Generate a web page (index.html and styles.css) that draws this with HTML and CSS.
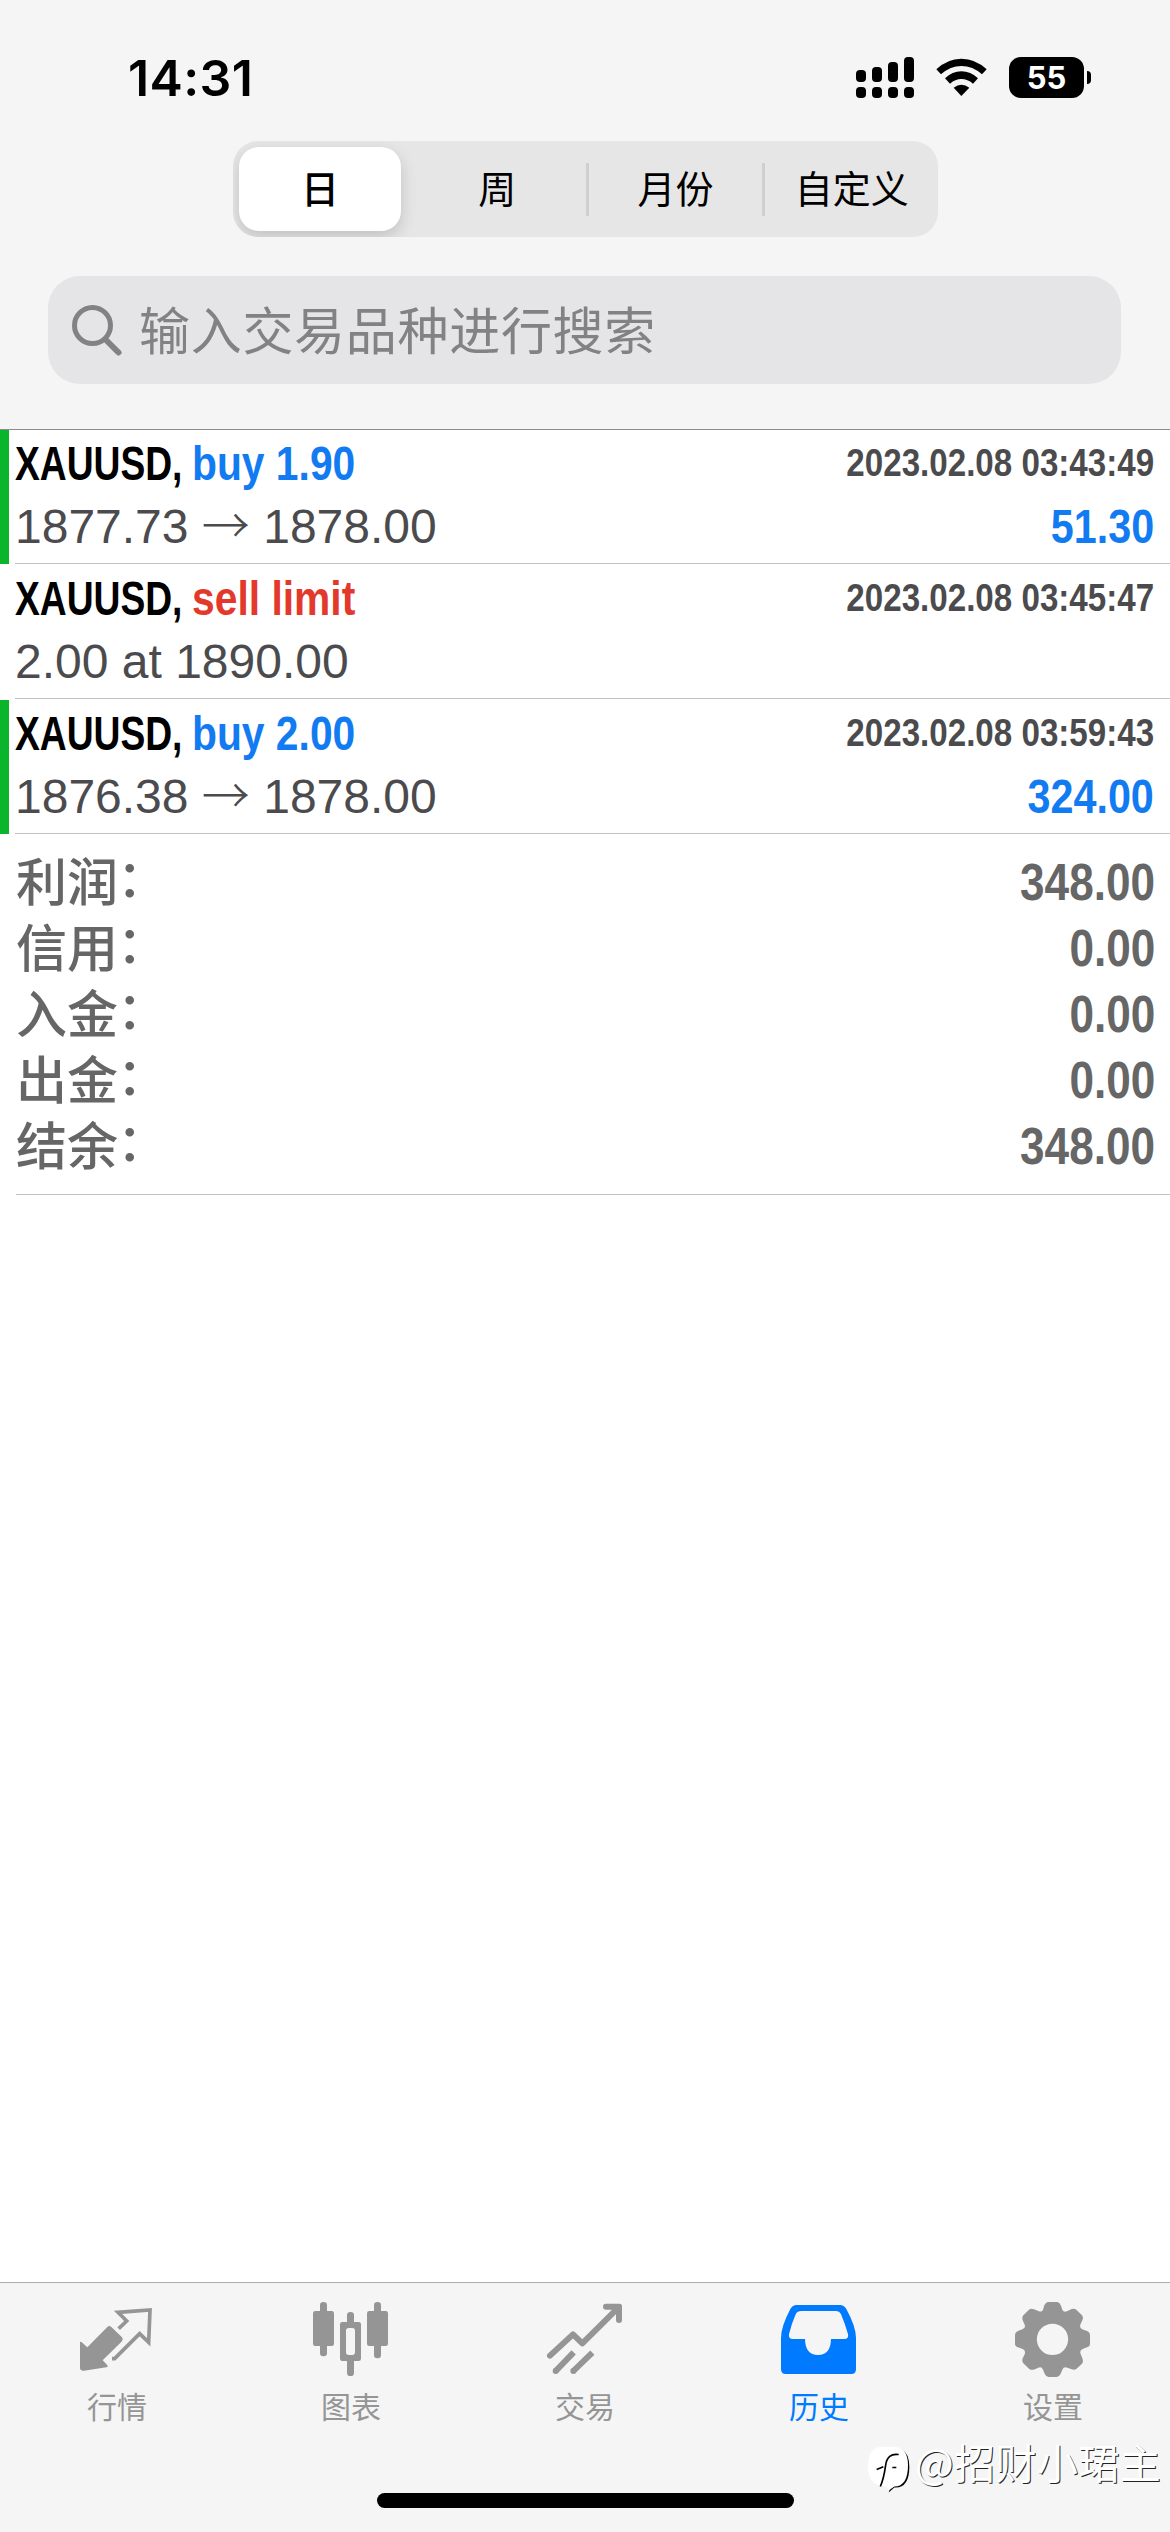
FILE: index.html
```html
<!DOCTYPE html>
<html lang="zh-CN">
<head>
<meta charset="utf-8">
<title>历史</title>
<link rel="stylesheet" href="styles.css">
</head>
<body>
<div class="app">
  <header class="top">
    <div class="status">
      <span class="time">14:31</span>
      <div class="status-icons">
        <svg class="signal" viewBox="0 0 58 41">
          <rect x="0" y="13" width="10" height="12" rx="4"/><rect x="16" y="10" width="10" height="15" rx="4"/><rect x="32" y="5" width="10" height="20" rx="4"/><rect x="48" y="0" width="10" height="25" rx="4"/>
          <rect x="0" y="30" width="10" height="11" rx="4"/><rect x="16" y="30" width="10" height="11" rx="4"/><rect x="32" y="30" width="10" height="11" rx="4"/><rect x="48" y="30" width="10" height="11" rx="4"/>
        </svg>
        <svg class="wifi" viewBox="318 54 153 114">
          <path d="M319 88Q352 56 394 56Q437 56 470 88L456 103Q428 78 394 78Q361 78 333 103Z"/>
          <path d="M345 115Q367 94 394 94Q422 94 444 115L429 131Q413 117 394 117Q376 117 360 131Z"/>
          <path d="M371 143Q394 125 418 143L394 168Z"/>
        </svg>
        <div class="battery"><span class="level">55</span></div>
        <span class="nub"></span>
      </div>
    </div>
    <div class="segments">
      <span class="segment selected">日</span>
      <span class="segment">周</span>
      <span class="segment divided">月份</span>
      <span class="segment divided">自定义</span>
    </div>
    <div class="search">
      <svg class="glass" viewBox="0 0 50 52"><circle cx="20.5" cy="21.5" r="18" /><path d="M33.5 35.5L46.5 48.5"/></svg>
      <span class="placeholder">输入交易品种进行搜索</span>
    </div>
  </header>
  <main class="content">
    <section class="deal filled">
      <div class="line"><span class="title"><span class="symbol">XAUUSD,</span><span class="action buy">buy 1.90</span></span><span class="date">2023.02.08 03:43:49</span></div>
      <div class="line"><span class="price">1877.73 <span class="arrow">→</span> 1878.00</span><span class="profit">51.30</span></div>
    </section>
    <section class="deal">
      <div class="line"><span class="title"><span class="symbol">XAUUSD,</span><span class="action sell">sell limit</span></span><span class="date">2023.02.08 03:45:47</span></div>
      <div class="line"><span class="price">2.00 at 1890.00</span></div>
    </section>
    <section class="deal filled">
      <div class="line"><span class="title"><span class="symbol">XAUUSD,</span><span class="action buy">buy 2.00</span></span><span class="date">2023.02.08 03:59:43</span></div>
      <div class="line"><span class="price">1876.38 <span class="arrow">→</span> 1878.00</span><span class="profit">324.00</span></div>
    </section>
    <section class="totals">
      <div class="total"><span class="label">利润<span class="colon">：</span></span><span class="sum">348.00</span></div>
      <div class="total"><span class="label">信用<span class="colon">：</span></span><span class="sum">0.00</span></div>
      <div class="total"><span class="label">入金<span class="colon">：</span></span><span class="sum">0.00</span></div>
      <div class="total"><span class="label">出金<span class="colon">：</span></span><span class="sum">0.00</span></div>
      <div class="total"><span class="label">结余<span class="colon">：</span></span><span class="sum">348.00</span></div>
    </section>
  </main>
  <nav class="tabs">
    <div class="tab">
      <svg class="icon" viewBox="234 90 234 234">
        <path class="solid" d="M240 216Q242 213 247 218L262 232L322 171Q328 165 334 171L366 202Q371 208 366 214L308 271L321 284Q326 290 319 292L252 302Q240 303 240 293Z"/>
        <path class="outline" stroke-width="11" d="M356 176L380 153L354 127L450 120L446 217L419 191L344 266L336 266"/>
      </svg>
      <span>行情</span>
    </div>
    <div class="tab">
      <svg class="icon" viewBox="936 90 234 234">
        <rect x="960" y="96" width="21" height="163" rx="10"/><rect x="939" y="123" width="63" height="105" rx="7"/>
        <rect x="1122" y="96" width="21" height="169" rx="10"/><rect x="1101" y="123" width="63" height="105" rx="7"/>
        <rect x="1041" y="126" width="21" height="40" rx="10"/><rect x="1041" y="262" width="21" height="56" rx="10"/>
        <path fill-rule="evenodd" d="M1027 156H1076Q1083 156 1083 163V266Q1083 273 1076 273H1027Q1020 273 1020 266V163Q1020 156 1027 156ZM1046 174Q1038 174 1038 182V246Q1038 255 1046 255H1057Q1065 255 1065 246V182Q1065 174 1057 174Z"/>
      </svg>
      <span>图表</span>
    </div>
    <div class="tab">
      <svg class="icon" viewBox="438 90 234 234">
        <path class="outline round" stroke-width="18" d="M450 257L519 193L547 220L652 116M618 110H657V150"/>
        <path d="M630 102H658Q666 102 666 110V142L640 128Z"/>
        <path class="outline" stroke-width="18" d="M466 304L521 247M519 304L577 248"/>
        <circle cx="467" cy="303" r="9"/><circle cx="520" cy="303" r="9"/>
      </svg>
      <span>交易</span>
    </div>
    <div class="tab active">
      <svg class="icon" viewBox="60 90 234 234">
        <path fill-rule="evenodd" d="M110 105H240Q252 105 259 117Q288 170 288 204V298Q288 312 274 312H77Q63 312 63 298V204Q63 170 91 117Q98 105 110 105ZM124 123Q112 123 107 133Q94 163 87 193Q85 207 98 207H135Q136 255 174 255Q212 255 213 207H253Q267 207 264 193Q256 163 243 133Q238 123 227 123Z"/>
      </svg>
      <span>历史</span>
    </div>
    <div class="tab">
      <svg class="icon" viewBox="762 90 234 234">
        <path fill-rule="evenodd" d="M863 96H892Q900 98 903 107L907 119Q911 128 921 124L935 117Q943 114 949 119L966 136Q971 142 967 151L961 164Q958 174 967 178L981 183Q990 187 990 196V221Q990 229 981 232L968 237Q958 241 962 252L967 265Q971 275 966 281L949 297Q943 301 935 298L922 293Q911 289 907 299L902 311Q898 320 890 321H866Q857 320 854 311L849 299Q845 289 835 293L821 299Q813 301 807 296L790 280Q785 274 788 265L794 253Q798 241 788 237L774 232Q765 229 765 221V196Q765 187 774 183L787 178Q798 174 794 164L788 151Q785 142 790 136L807 119Q813 114 822 118L835 123Q845 128 849 119L853 106Q856 98 863 96ZM877.500 161A47 47 0 1 0 877.500 255A47 47 0 1 0 877.500 161Z"/>
      </svg>
      <span>设置</span>
    </div>
  </nav>
  <div class="home-indicator"></div>
  <div class="watermark">
    <svg class="badge" viewBox="320 525 132 146">
      <path class="badge-edge" d="M385 667L402 652Q447 655 447 590Q446 548 426 540Z"/>
      <path class="badge-body" d="M365 530H400Q443 532 443 585Q443 648 402 649L384 662L378 648Q323 650 323 590Q323 530 365 530Z"/>
      <path class="badge-cut" d="M415 553Q381 548 376 585Q370 627 360 649M349 598L369 590M396 592H408"/>
    </svg>
    <span class="author">@招财小珺主</span>
  </div>
</div>
</body>
</html>
```
FILE: styles.css
```css
* { box-sizing: border-box; }
body { margin: 0; background: #fff; }

.app {
  position: relative;
  display: flex;
  flex-direction: column;
  width: 1170px;
  height: 2532px;
  overflow: hidden;
  background: #fff;
  font-family: "Liberation Sans", "Noto Sans CJK SC", sans-serif;
  white-space: nowrap;
}

/* Header */
.top {
  display: flex;
  flex-direction: column;
  height: 430px;
  background: #f5f5f5;
  border-bottom: 1px solid #8c8c8c;
}
.status {
  display: flex;
  justify-content: space-between;
  height: 141px;
  padding: 57px 79px 0 128px;
}
.time {
  font: 600 50px/42px Inter, sans-serif;
  letter-spacing: .4px;
}
.status-icons { display: flex; align-items: flex-start; }
.signal { width: 58px; height: 41px; }
.wifi { width: 51px; height: 38px; margin: 1px 0 0 22px; }
.battery {
  display: flex;
  align-items: center;
  justify-content: center;
  width: 75px;
  height: 41px;
  margin-left: 22px;
  border-radius: 12px;
  background: #000;
}
.level { color: #fff; font: 700 31px/41px Inter, sans-serif; }
.nub { width: 4px; height: 13px; margin: 14px 0 0 3px; border-radius: 0 4px 4px 0; background: #000; }

.segments {
  display: grid;
  grid-template-columns: repeat(4, 1fr);
  width: 705px;
  height: 96px;
  margin-left: 233px;
  border-radius: 25px;
  background: #e6e6e6;
  overflow: hidden;
}
.segment {
  display: flex;
  align-items: center;
  justify-content: center;
  padding-bottom: 4px;
  font: 400 38px/90px "Noto Sans CJK SC", sans-serif;
}
.selected {
  width: 162px;
  height: 84px;
  margin: 6px;
  border-radius: 20px;
  background: #fff;
  font-weight: 500;
  box-shadow: 0 6px 16px rgba(0, 0, 0, .16);
}
.divided {
  background: linear-gradient(#cfcfcf, #cfcfcf) 0 22px / 3px 53px no-repeat;
  padding-left: 4px;
}

.search {
  display: flex;
  align-items: center;
  width: 1073px;
  height: 108px;
  margin: 39px 0 0 48px;
  padding: 0 0 0 24px;
  border-radius: 32px;
  background: #e5e5e7;
}
.glass { width: 50px; height: 52px; fill: none; stroke: #828284; stroke-width: 5; stroke-linecap: round; }
.glass path { stroke-width: 6; }
.placeholder {
  margin: -4px 0 0 17px;
  color: #828284;
  font: 400 51px/80px "Noto Sans CJK SC", sans-serif;
  letter-spacing: .7px;
}

/* History list */
.content { flex: 1; }
.deal {
  height: 135px;
  padding: 2px 16px 0 6px;
  border-left: 9px solid transparent;
  background: linear-gradient(#c2c2c4, #c2c2c4) 6px 133px / 100% 1px no-repeat;
}
.filled { border-image: linear-gradient(#0bb52b 134px, transparent 134px) 0 0 0 9; }
.line { display: flex; justify-content: space-between; height: 63px; line-height: 63px; }
.title { display: flex; font-size: 48px; font-weight: 700; }
.symbol { width: 177px; transform: scaleX(.775); transform-origin: 0 0; }
.action { transform: scaleX(.85); transform-origin: 0 0; }
.buy, .profit { color: #137bf2; }
.sell { color: #e3392c; }
.date {
  margin-top: -1px;
  color: #4b4b4e;
  font-size: 39px;
  font-weight: 700;
  transform: scaleX(.85);
  transform-origin: 100% 0;
}
.price { color: #4b4b4e; font-size: 48px; }
.arrow { font-family: "Noto Sans CJK SC", sans-serif; font-weight: 300; line-height: 0; }
.profit { font-size: 48px; font-weight: 700; transform: scaleX(.86); transform-origin: 100% 0; }

.totals {
  margin-left: 16px;
  padding: 15px 15px 14px 0;
  border-bottom: 1px solid #c2c2c4;
  color: #666;
}
.total { display: flex; justify-content: space-between; height: 66px; line-height: 66px; }
.label { margin-top: 1px; font-size: 51px; font-weight: 500; }
.colon { display: inline-block; transform: translate(-1px, -4px); }
.sum { font-size: 51px; font-weight: 700; transform: scaleX(.865); transform-origin: 100% 0; }

/* Tab bar */
.tabs {
  display: grid;
  grid-template-columns: repeat(5, 1fr);
  height: 250px;
  padding-top: 17px;
  border-top: 1px solid #adadad;
  background: #f5f5f5;
}
.tab {
  display: flex;
  flex-direction: column;
  align-items: center;
  gap: 7px;
  color: #959595;
  font: 400 30px/40px "Noto Sans CJK SC", sans-serif;
}
.active { color: #007aff; }
.icon { width: 78px; height: 78px; fill: currentColor; }
.outline { fill: none; stroke: currentColor; }
.round { stroke-linecap: round; stroke-linejoin: round; }

/* Overlays */
.home-indicator {
  position: absolute;
  left: 377px;
  bottom: 24px;
  width: 417px;
  height: 15px;
  border-radius: 8px;
  background: #000;
}
.watermark {
  position: absolute;
  left: 867px;
  top: 2445px;
  display: flex;
  color: #fff;
}
.badge { width: 44px; height: 49px; }
.badge-body { fill: #fff; }
.badge-edge { fill: #000; }
.badge-cut { fill: none; stroke: #000; stroke-width: 5; }
.author {
  margin: -6px 0 0 4px;
  font: 400 41px/44px "Noto Sans CJK SC", sans-serif;
  letter-spacing: .4px;
  text-shadow: 1px 1px 0 #222;
}
```
